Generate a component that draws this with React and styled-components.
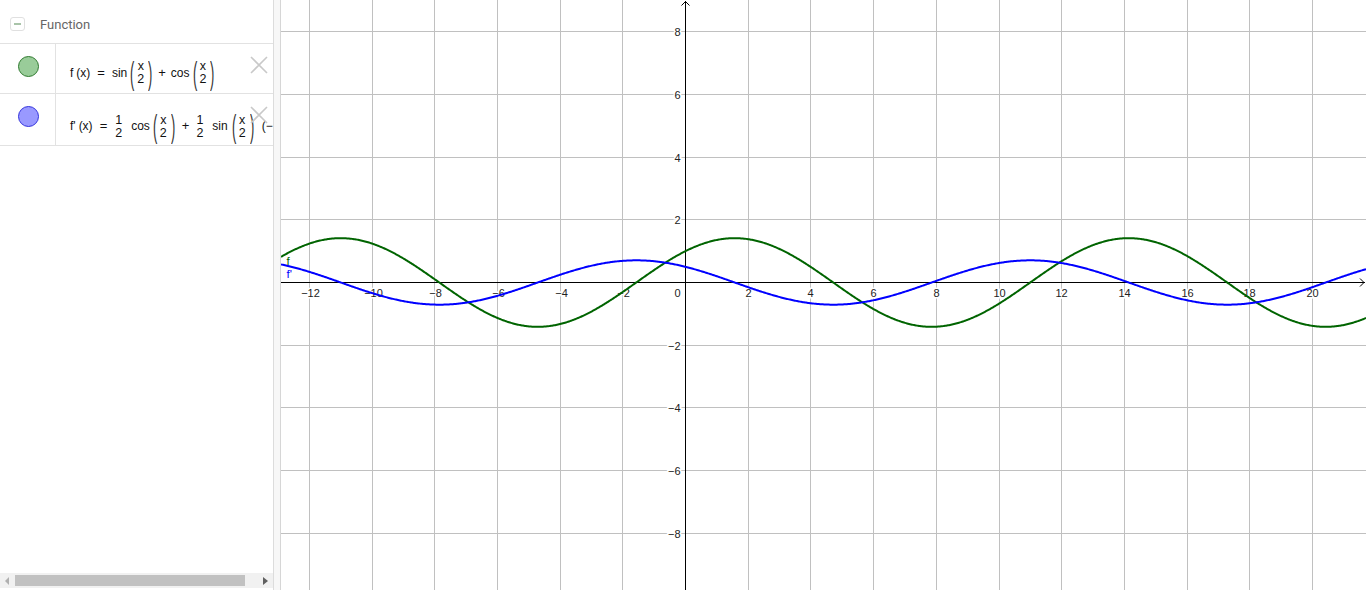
import React from "react";
import styled, { createGlobalStyle } from "styled-components";

const Global = createGlobalStyle`
  html, body { margin: 0; padding: 0; background: #fff; overflow: hidden; }
  #root { width: 1366px; height: 590px; }
`;

const Page = styled.div`
  display: flex;
  width: 1366px;
  height: 590px;
  font-family: "Liberation Sans", Arial, sans-serif;
`;

const Panel = styled.div`
  width: 273px;
  flex: none;
  display: flex;
  flex-direction: column;
  border-right: 1px solid #dcdcdc;
  background: #fff;
  overflow: hidden;
`;

const Splitter = styled.div`
  width: 6px;
  flex: none;
  background: #f7f7f7;
  border-right: 1px solid #d6d6d6;
`;

const Graph = styled.div`
  flex: 1;
  position: relative;
  overflow: hidden;
`;

const Header = styled.div`
  height: 44px;
  flex: none;
  display: flex;
  align-items: center;
  padding-left: 10px;
  padding-top: 5px;
  box-sizing: border-box;
  border-bottom: 1px solid #e2e2e2;
`;

const Toggle = styled.div`
  width: 13px;
  height: 12px;
  border: 1px solid #e0e0e0;
  border-radius: 3px;
  display: flex;
  align-items: center;
  justify-content: center;
  margin-right: 15px;
  &::after {
    content: "";
    width: 7px;
    height: 1.5px;
    background: #a9c4a9;
  }
`;

const Title = styled.span`
  font-family: Roboto, "Liberation Sans", sans-serif;
  font-size: 13px;
  color: #666;
`;

const Row = styled.div`
  position: relative;
  display: flex;
  height: ${(p) => p.$h}px;
  flex: none;
  border-bottom: 1px solid #e2e2e2;
`;

const MarbleCell = styled.div`
  width: 56px;
  flex: none;
  border-right: 1px solid #e2e2e2;
  display: flex;
  justify-content: center;
  padding-top: 12px;
  box-sizing: border-box;
`;

const Marble = styled.div`
  width: 19px;
  height: 19px;
  border-radius: 50%;
  background: ${(p) => p.$fill};
  border: 1px solid ${(p) => p.$stroke};
  margin-left: 1px;
`;

const FormulaCell = styled.div`
  flex: 1;
  min-width: 0;
  overflow: hidden;
  display: flex;
  align-items: center;
  padding-left: 14px;
  padding-top: ${(p) => p.$pt}px;
  box-sizing: border-box;
`;

const Formula = styled.div`
  display: flex;
  align-items: center;
  white-space: nowrap;
  font-size: 12px;
  color: #111;
`;

const Txt = styled.span`
  line-height: 14px;
  margin-left: ${(p) => p.$ml || 0}px;
  margin-right: ${(p) => p.$mr || 0}px;
`;

const Op = styled.span`
  line-height: 14px;
  font-size: 13px;
  margin: 0 ${(p) => p.$m || 6}px;
`;

const Frac = styled.span`
  display: inline-flex;
  flex-direction: column;
  align-items: center;
  font-size: 12.5px;
  line-height: 12px;
  gap: 1px;
  padding: 0 ${(p) => p.$pad || 1}px;
`;

const Paren = styled.span`
  display: inline-block;
  width: 7px;
  font-size: 32px;
  line-height: 30px;
  text-align: center;
  transform: scaleX(0.4);
  color: #333;
`;

const Close = styled.div`
  position: absolute;
  left: 250px;
  top: 12px;
  width: 18px;
  height: 18px;
`;

const Spacer = styled.div`
  flex: 1;
`;

const ScrollBar = styled.div`
  height: 15px;
  flex: none;
  margin-bottom: 2px;
  background: #f1f1f1;
  display: flex;
  align-items: center;
`;

const ArrowBtn = styled.div`
  width: 15px;
  height: 15px;
  flex: none;
  display: flex;
  align-items: center;
  justify-content: center;
`;

const Thumb = styled.div`
  width: 230px;
  height: 11px;
  background: #c1c1c1;
`;

const Track = styled.div`
  flex: 1;
`;

const Plot = styled.svg`
  display: block;
  font-family: "Liberation Sans", Arial, sans-serif;
`;

function X() {
  return (
    <Close>
      <svg width="18" height="18" viewBox="0 0 18 18">
        <path d="M1 1L17 17M17 1L1 17" stroke="#c9c9c9" strokeWidth="1.6" fill="none" />
      </svg>
    </Close>
  );
}

const F = ({ n, d, pad }) => (
  <Frac $pad={pad}>
    <span>{n}</span>
    <span>{d}</span>
  </Frac>
);

const Group = ({ n, d }) => (
  <>
    <Paren>(</Paren>
    <F n={n} d={d} pad={2} />
    <Paren>)</Paren>
  </>
);

const W = 1085;
const H = 590;
const OX = 404.5;
const OY = 282.5;
const S = 31.35;

function curve(fn) {
  const pts = [];
  for (let px = 0; px <= W; px += 1) {
    const x = (px - OX) / S;
    const y = OY - fn(x) * S;
    pts.push(`${px},${y.toFixed(2)}`);
  }
  return "M" + pts.join("L");
}

function GraphView() {
  const vx = [];
  for (let k = -12; k <= 21; k++) {
    if (k % 2 === 0) vx.push(k);
  }
  const hy = [-8, -6, -4, -2, 2, 4, 6, 8];
  const gx = (k) => Math.floor(OX + k * S) + 0.5;
  const gy = (k) => Math.floor(OY - k * S) + 0.5;
  const fPath = curve((x) => Math.sin(x / 2) + Math.cos(x / 2));
  const dPath = curve((x) => 0.5 * Math.cos(x / 2) - 0.5 * Math.sin(x / 2));
  const lbl = (s) => (s < 0 ? "\u2212" + Math.abs(s) : String(s));
  return (
    <Plot width={W} height={H} viewBox={`0 0 ${W} ${H}`}>
      {vx.map((k) =>
        k === 0 ? null : (
          <line key={"v" + k} x1={gx(k)} x2={gx(k)} y1={0} y2={H} stroke="#c0c0c0" strokeWidth="1" />
        )
      )}
      {hy.map((k) => (
        <line key={"h" + k} x1={0} x2={W} y1={gy(k)} y2={gy(k)} stroke="#c0c0c0" strokeWidth="1" />
      ))}
      <g fontSize="11" fill="#222" stroke="#fff" strokeWidth="3" paintOrder="stroke">
        {vx.map((k) =>
          k === 0 ? null : (
            <text key={"tx" + k} x={gx(k) + (k < 0 ? 1 : 0)} y={OY + 14} textAnchor="middle">
              {lbl(k)}
            </text>
          )
        )}
        {hy.map((k) => (
          <text key={"ty" + k} x={OX - 5} y={gy(k) + 4} textAnchor="end">
            {lbl(k)}
          </text>
        ))}
        <text x={OX - 5} y={OY + 14} textAnchor="end">0</text>
      </g>
      <line x1={0} x2={W - 1} y1={OY} y2={OY} stroke="#000" strokeWidth="1" />
      <line x1={OX} x2={OX} y1={1} y2={H} stroke="#000" strokeWidth="1" />
      <path d={`M${OX - 4} 5.5L${OX} 1.5L${OX + 4} 5.5`} stroke="#000" fill="none" strokeWidth="1" />
      <path d={`M${W - 6} ${OY - 4}L${W - 2} ${OY}L${W - 6} ${OY + 4}`} stroke="#000" fill="none" strokeWidth="1" />
      <path d={fPath} stroke="#006400" strokeWidth="2" fill="none" />
      <path d={dPath} stroke="#0000ff" strokeWidth="2" fill="none" />
      <text x={5.5} y={265} fontSize="11.5" fill="#006400">f</text>
      <text x={5.5} y={278} fontSize="11.5" fill="#0000ff">f'</text>
    </Plot>
  );
}

export default function App() {
  return (
    <Page>
      <Global />
      <Panel>
        <Header>
          <Toggle />
          <Title>Function</Title>
        </Header>
        <Row $h={49}>
          <MarbleCell>
            <Marble $fill="#99cc99" $stroke="#2f7a2f" />
          </MarbleCell>
          <FormulaCell $pt={8}>
            <Formula>
              <Txt $mr={3}>f</Txt>
              <Txt>(x)</Txt>
              <Op $m={7}>=</Op>
              <Txt $mr={1}>sin</Txt>
              <Group n="x" d="2" />
              <Op $m={5}>+</Op>
              <Txt $mr={1}>cos</Txt>
              <Group n="x" d="2" />
            </Formula>
          </FormulaCell>
          <X />
        </Row>
        <Row $h={51}>
          <MarbleCell>
            <Marble $fill="#9999ff" $stroke="#3333dd" />
          </MarbleCell>
          <FormulaCell $pt={13}>
            <Formula>
              <Txt $mr={3}>f'</Txt>
              <Txt>(x)</Txt>
              <Op $m={7}>=</Op>
              <F n="1" d="2" />
              <Txt $ml={8} $mr={1}>cos</Txt>
              <Group n="x" d="2" />
              <Op $m={6}>+</Op>
              <F n="1" d="2" />
              <Txt $ml={8} $mr={2}>sin</Txt>
              <Group n="x" d="2" />
              <Txt $ml={7}>(−</Txt>
            </Formula>
          </FormulaCell>
          <X />
        </Row>
        <Spacer />
        <ScrollBar>
          <ArrowBtn>
            <svg width="5" height="8" viewBox="0 0 5 8">
              <path d="M4 0L0 4L4 8Z" fill="#b0b0b0" />
            </svg>
          </ArrowBtn>
          <Thumb />
          <Track />
          <ArrowBtn>
            <svg width="5" height="8" viewBox="0 0 5 8">
              <path d="M0 0L5 4L0 8Z" fill="#606060" />
            </svg>
          </ArrowBtn>
        </ScrollBar>
      </Panel>
      <Splitter />
      <Graph>
        <GraphView />
      </Graph>
    </Page>
  );
}
